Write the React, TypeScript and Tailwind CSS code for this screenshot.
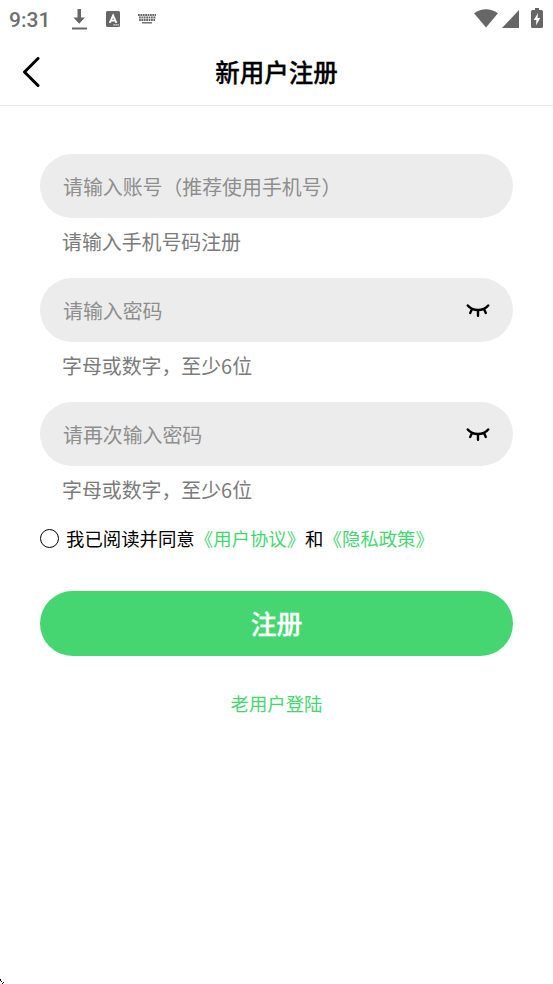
import React from "react";

function StatusBar() {
  return (
    <div className="flex h-[38px] items-center justify-between pl-[9px] pr-[10px] text-[#666666]">
      <div className="flex items-center">
        <span className="w-[62px] pt-px font-['Roboto',sans-serif] text-[21px] font-medium leading-[38px] text-[#6e6e6e]">9:31</span>
        <svg width="17" height="21" viewBox="0 0 17 21" fill="currentColor">
          <path d="M6.500 0h3.500v8.500h4L8.200 14.800 2.500 8.500h4z" />
          <path d="M1 18.500h15v2H1z" />
        </svg>
        <svg className="ml-[18px]" width="14" height="16" viewBox="0 0 14 16">
          <rect width="14" height="16" rx="1.500" fill="currentColor" />
          <path d="M3.800 11.800 7.100 4.500 10.400 11.800M5 9.600h4.200" fill="none" stroke="#fff" strokeWidth="1.900" />
          <path d="M7.500 13.200h1.200v1.200H7.500zM9.500 13.200h1.200v1.200H9.500zM11.500 13.200h1.200v1.200h-1.200z" fill="#fff" />
        </svg>
        <svg className="ml-[18px]" width="18" height="10" viewBox="0 0 18 10" fill="none" stroke="currentColor">
          <path d="M0 1h18M1 3.500h17M1 6h16" strokeWidth="1.800" strokeDasharray="1.800 .6" />
          <path d="M4 8.800h10" strokeWidth="1.400" />
        </svg>
      </div>
      <div className="flex items-center pb-0.5">
        <svg width="24" height="19" viewBox="0 0 24 19" fill="currentColor">
          <path d="M0 4.200Q12-3.800 24 4.200L12 18.500z" />
        </svg>
        <svg className="ml-[4px] mt-[2px]" width="17" height="18" viewBox="0 0 17 18" fill="currentColor">
          <path d="M17 0v18H0z" />
        </svg>
        <svg className="ml-[12px]" width="12" height="20" viewBox="0 0 12 20">
          <path d="M4 0h4v2h2.500Q12 2 12 3.500v15q0 1.500-1.500 1.500h-9Q0 20 0 18.500v-15Q0 2 1.500 2H4z" fill="currentColor" />
          <path d="M7 5 2.800 12h2.600L5 17.500 9.200 10H6.600z" fill="#fff" />
        </svg>
      </div>
    </div>
  );
}

function ClosedEye() {
  return (
    <svg width="24" height="13" viewBox="0 0 24 13" fill="none" stroke="#000" strokeWidth="2.400" strokeLinecap="round">
      <path d="M1.800 1.500Q5.500 6 12 6T22.200 1.500" />
      <path d="M12 6.500v5.200M5.800 5.500 4.200 9M18.200 5.500 19.800 9" />
    </svg>
  );
}

function Field({ placeholder, hint, secret = false }: { placeholder: string; hint: string; secret?: boolean }) {
  return (
    <div className="h-[124px]">
      <div className="flex h-16 items-center justify-between rounded-full bg-[#ececec] px-[23px]">
        <span className="pt-0.5 text-[19.900px] leading-[30px] text-[#8e8e8e]">{placeholder}</span>
        {secret && <ClosedEye />}
      </div>
      <p className="pl-[22px] pt-[9px] text-[19.900px] leading-[30px] text-[#7b7b7b]">{hint}</p>
    </div>
  );
}

export default function App() {
  return (
    <div lang="zh-CN" className="flex h-[984px] w-[553px] flex-col overflow-hidden bg-white font-['Noto_Sans_CJK_SC',sans-serif] text-black">
      <StatusBar />
      <header className="grid h-[68px] grid-cols-[60px_1fr_60px] items-center border-b border-[#e9e9e9]">
        <button className="pl-[22px]" aria-label="返回">
          <svg width="18" height="30" viewBox="0 0 18 30" fill="none" stroke="#000" strokeWidth="3" strokeLinecap="round" strokeLinejoin="round">
            <path d="M16 1.500 2.500 15 16 28.500" />
          </svg>
        </button>
        <h1 className="text-center text-[24.500px] font-medium leading-9 [-webkit-text-stroke:0.3px_#000]">新用户注册</h1>
      </header>
      <main className="flex flex-1 flex-col px-10 pt-12">
        <Field placeholder="请输入账号（推荐使用手机号）" hint="请输入手机号码注册" />
        <Field placeholder="请输入密码" hint="字母或数字，至少6位" secret />
        <Field placeholder="请再次输入密码" hint="字母或数字，至少6位" secret />
        <div className="flex h-6 items-center">
          <span className="mr-[7px] size-[19px] rounded-full border-[1.500px] border-black" />
          <p className="whitespace-nowrap text-[18.400px] leading-6">
            我已阅读并同意<span className="text-[#46d671]">《用户协议》</span>和<span className="text-[#46d671]">《隐私政策》</span>
          </p>
        </div>
        <button className="mt-[41px] h-[64.500px] shrink-0 rounded-full bg-[#46d671] text-[25.800px] font-medium leading-9 text-white [-webkit-text-stroke:0.3px_#fff]">注册</button>
        <a className="mt-[33px] text-center text-[18.400px] leading-7 text-[#46d671]">老用户登陆</a>
      </main>
      <svg width="6" height="6" viewBox="0 0 6 6" fill="#000">
        <path d="M0 1h1v2H0zM1 3h1v1H1zM3 4h1v1H3zM2 5h1v1H2z" />
      </svg>
    </div>
  );
}
